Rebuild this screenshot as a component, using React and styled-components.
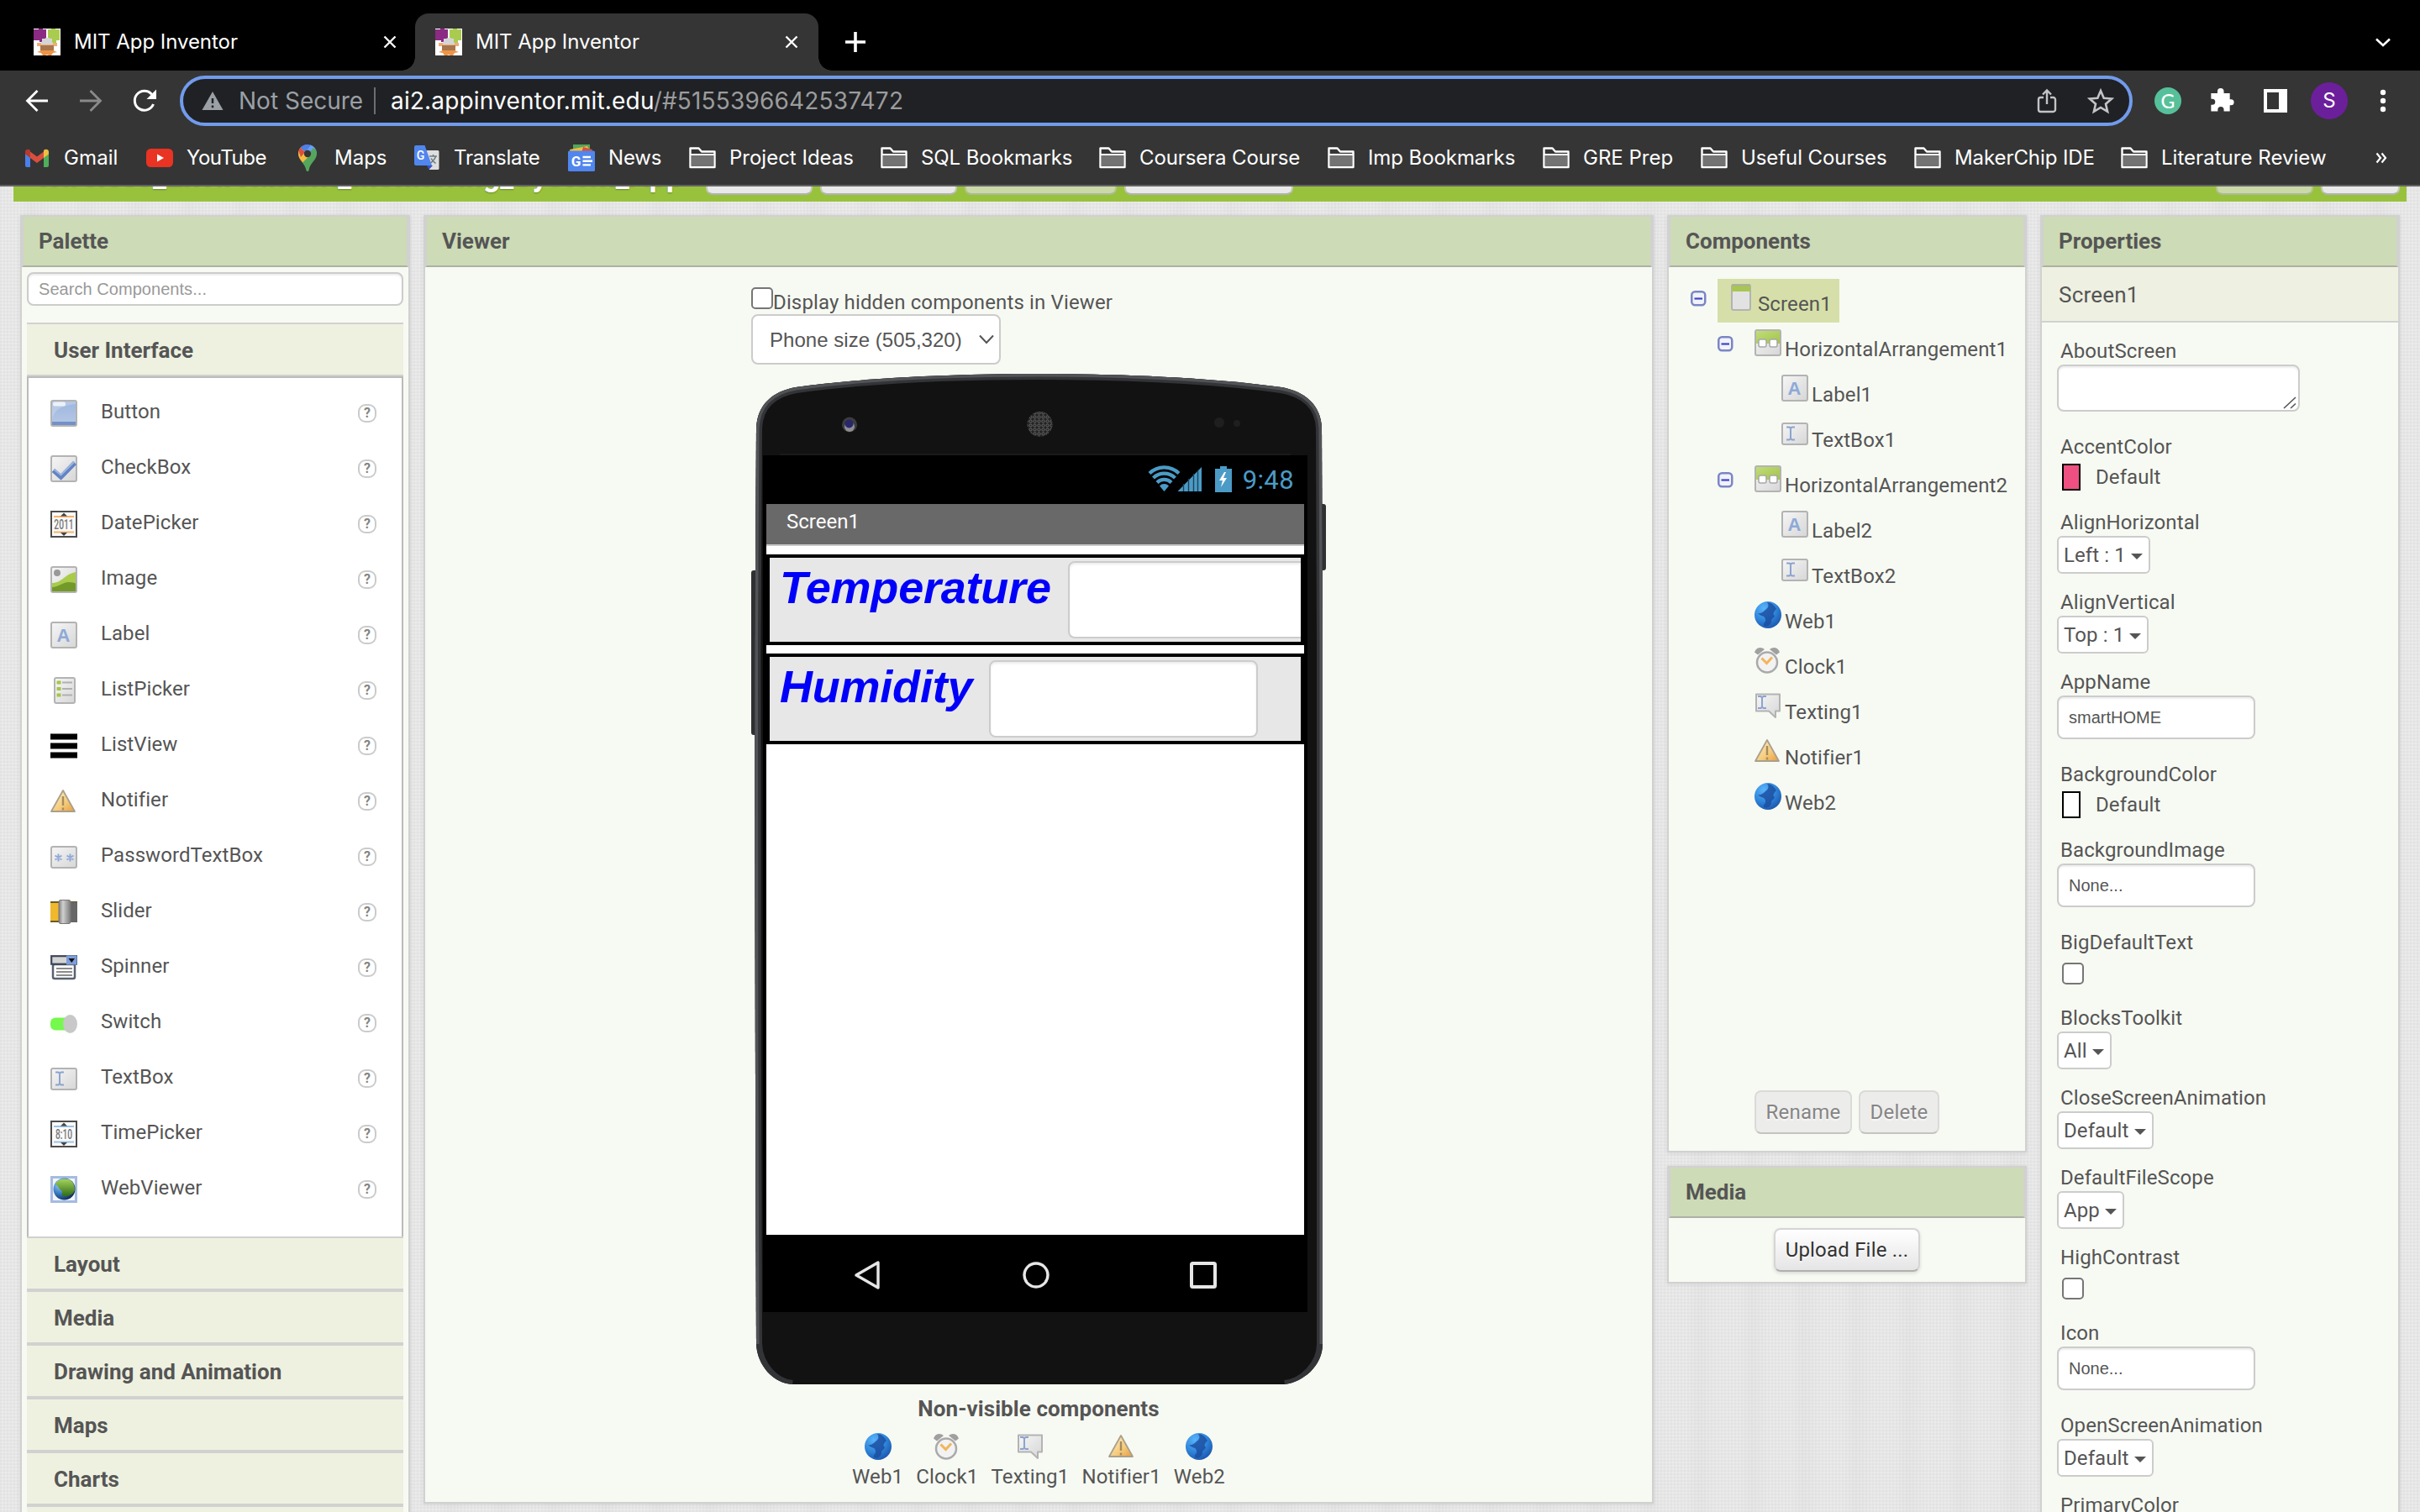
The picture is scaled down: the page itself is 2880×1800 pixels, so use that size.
import React from 'react';
import styled, { createGlobalStyle, css } from 'styled-components';

const sans = '"Liberation Sans", Arial, sans-serif';
const chromeFont = 'Inter, "Liberation Sans", sans-serif';
const pageFont = 'Roboto, "Liberation Sans", sans-serif';
const line = '#d1d1d1';
const ink = '#555';

const GlobalStyle = createGlobalStyle`
  * { box-sizing: border-box; }
  html, body { margin: 0; padding: 0; background: #e8e8e8; }
  body { overflow: hidden; font-family: ${pageFont}; }
  svg { display: block; flex: none; }
`;

/* ---------- browser chrome ---------- */

const Window = styled.div`
  width: 2880px;
  height: 1800px;
  overflow: hidden;
  display: flex;
  flex-direction: column;
`;

const TabStrip = styled.div`
  flex: none;
  height: 84px;
  padding-top: 16px;
  background: #000;
  display: flex;
  color: #fff;
`;

const Tab = styled.div`
  height: 68px;
  width: ${(p) => (p.$active ? 480 : 494)}px;
  padding: 0 ${(p) => (p.$active ? 24 : 22)}px 0 ${(p) => (p.$active ? 24 : 40)}px;
  display: flex;
  align-items: center;
  gap: 16px;
  font: 400 24px ${chromeFont};
  ${(p) =>
    p.$active &&
    css`
      position: relative;
      background: #353535;
      border-radius: 16px 16px 0 0;
      &::before,
      &::after {
        content: '';
        position: absolute;
        bottom: 0;
        width: 16px;
        height: 16px;
      }
      &::before {
        left: -16px;
        background: radial-gradient(circle at 0 0, transparent 15.5px, #353535 16px);
      }
      &::after {
        right: -16px;
        background: radial-gradient(circle at 100% 0, transparent 15.5px, #353535 16px);
      }
    `}
`;

const TabTitle = styled.span`
  flex: 1;
  white-space: nowrap;
  padding-bottom: 1px;
  letter-spacing: -0.04px;
`;

const NewTab = styled.div`
  display: flex;
  align-items: center;
  padding-left: 30px;
  flex: 1;
`;

const TabSearch = styled.div`
  display: flex;
  align-items: center;
  padding-right: 33px;
`;

const Toolbar = styled.div`
  flex: none;
  height: 72px;
  padding: 0 28px;
  background: #353535;
  display: flex;
  align-items: center;
`;

const NavButtons = styled.div`
  display: flex;
  gap: 32px;
  margin-right: 26px;
`;

const Omnibox = styled.div`
  flex: 1;
  height: 60px;
  border: 4px solid #719bec;
  border-radius: 30px;
  background: #202124;
  padding: 0 18px 0 22px;
  display: flex;
  align-items: center;
  font: 400 28px ${chromeFont};
  white-space: nowrap;
`;

const Security = styled.span`
  color: #9aa0a6;
  margin-left: 18px;
  width: 163px;
  height: 32px;
  line-height: 32px;
  border-right: 2px solid #6b6e72;
`;

const Url = styled.span`
  flex: 1;
  margin-left: 18px;
  color: #fff;
  letter-spacing: 0.17px;
`;

const UrlPath = styled.span`
  color: #9b9c9d;
`;

const OmniActions = styled.div`
  display: flex;
  gap: 32px;
`;

const Extensions = styled.div`
  display: flex;
  align-items: center;
  gap: 32px;
  margin: 0 26px;
`;

const Avatar = styled.div`
  width: 44px;
  height: 44px;
  border-radius: 50%;
  background: #6c1f9b;
  color: #fff;
  font: 400 24px/43px ${chromeFont};
  text-align: center;
  margin-right: 26px;
`;

const Grammarly = styled.div`
  width: 32px;
  height: 32px;
  border-radius: 50%;
  background: #56c09a;
  color: #fff;
  font: 500 23px/32px Lato, sans-serif;
  text-align: center;
`;

const BookmarkBar = styled.div`
  flex: none;
  height: 66px;
  padding-left: 28px;
  background: #353535;
  border-bottom: 2px solid #626264;
  display: flex;
  align-items: center;
`;

const BookmarkItem = styled.div`
  width: ${(p) => p.$width}px;
  display: flex;
  align-items: center;
  gap: 16px;
  color: #fff;
  font: 400 24px ${chromeFont};
  letter-spacing: ${(p) => p.$spacing || 0}px;
  white-space: nowrap;
`;

const BookmarkName = styled.span`
  padding-bottom: 2px;
`;

/* ---------- application page ---------- */

const Page = styled.div`
  flex: 1;
  min-height: 0;
  display: flex;
  flex-direction: column;
  background-color: #e9e9e9;
  background-image: repeating-linear-gradient(0deg, rgba(0, 0, 0, 0.018) 0 2px, transparent 2px 4px),
    repeating-linear-gradient(90deg, rgba(0, 0, 0, 0.018) 0 2px, transparent 2px 4px),
    repeating-linear-gradient(90deg, rgba(255, 255, 255, 0.1) 0 22px, rgba(0, 0, 0, 0.006) 38px, rgba(255, 255, 255, 0.1) 62px);
`;

const ProjectBar = styled.div`
  flex: none;
  height: 18px;
  margin: 0 16px;
  padding-right: 8px;
  background: #99c23c;
  overflow: hidden;
  display: flex;
  align-items: flex-start;
`;

const ProjectName = styled.div`
  width: 797px;
  height: 48px;
  margin: -31px 27px 0 0;
  text-align: right;
  color: #fff;
  font: 700 36px/36px ${pageFont};
  white-space: nowrap;
  text-shadow: 0 1px 2px rgba(0, 0, 0, 0.3);
`;

const BarButton = styled.div`
  width: ${(p) => p.$width}px;
  height: 10px;
  border: 2px solid ${(p) => (p.$disabled ? '#b5c58d' : '#c3c9b4')};
  border-top: 0;
  border-bottom-color: ${(p) => (p.$disabled ? '#adb99a' : '#b2b3b6')};
  border-radius: 0 0 8px 8px;
  background: ${(p) => (p.$disabled ? '#cbd8a8' : '#e9e9e9')};
  margin-right: 9px;
  &:last-child {
    margin-right: 0;
  }
`;

const BarSpacer = styled.div`
  flex: 1;
`;

const Workspace = styled.div`
  flex: 1;
  min-height: 0;
  display: grid;
  grid-template-columns: 464px 1464px 428px 428px;
  gap: 16px;
  padding: 16px 24px 0;
  align-items: start;
`;

const Column = styled.div`
  display: flex;
  flex-direction: column;
  gap: 16px;
`;

const Panel = styled.section`
  height: ${(p) => p.$height}px;
  border: 2px solid ${line};
  background: #f7faf3;
  display: flex;
  flex-direction: column;
  color: ${ink};
  box-shadow: 0 1px 5px rgba(0, 0, 0, 0.08);
`;

const PanelHeader = styled.h2`
  flex: none;
  margin: 0;
  height: 60px;
  padding: 0 18px;
  border: 2px solid ${line};
  border-top: 0;
  border-bottom-color: #aeb0a6;
  background: #cddbb6;
  font: 700 26px/58px ${pageFont};
  color: ${ink};
`;

/* palette */

const PaletteBody = styled.div`
  padding: 6px;
  display: flex;
  flex-direction: column;
`;

const SearchBox = styled.div`
  height: 40px;
  border: 2px solid #ccc;
  border-radius: 8px;
  background: #fff;
  box-shadow: inset 0 2px 2px rgba(0, 0, 0, 0.07);
  padding-left: 12px;
  color: #999;
  font: 400 20px/36px ${sans};
  letter-spacing: 0.05px;
  margin-bottom: 20px;
`;

const Category = styled.div`
  height: 64px;
  border: solid ${line};
  border-width: 2px 0;
  background: #eef1e0;
  padding-left: 32px;
  font: 700 26px/62px ${pageFont};
`;

const ComponentList = styled.div`
  height: 1024px;
  border: 2px solid #bbb;
  border-bottom: 0;
  background: #fff;
  padding: 9px 26px 0;
`;

const PaletteRow = styled.div`
  height: 66px;
  display: flex;
  align-items: center;
`;

const PaletteName = styled.span`
  flex: 1;
  margin-left: 28px;
  padding-bottom: 4px;
  font: 400 24px ${pageFont};
  letter-spacing: 0.07px;
`;

const Help = styled.span`
  width: 22px;
  height: 22px;
  margin: 0 4px 0 0;
  border: 2px solid #cbcbcb;
  border-radius: 9px;
  font: 700 16px/18px ${pageFont};
  text-align: center;
  color: #858585;
`;

/* viewer */

const ViewerBody = styled.div`
  padding: 22px 0 0 388px;
  display: flex;
  flex-direction: column;
  align-items: flex-start;
`;

const HiddenToggle = styled.label`
  height: 34px;
  display: flex;
  align-items: flex-start;
  font: 400 24px/34px ${pageFont};
  letter-spacing: 0.14px;
`;

const Checkbox = styled.span`
  width: 26px;
  height: 26px;
  border: 2px solid #767676;
  border-radius: 5px;
  background: #fff;
  margin-top: ${(p) => p.$top || 0}px;
  margin-left: ${(p) => p.$left || 0}px;
`;

const ToggleText = styled.span`
  padding-top: 3px;
`;

const SizeSelect = styled.div`
  width: 297px;
  height: 60px;
  border: 2px solid #ccc;
  border-radius: 8px;
  background: #fff;
  padding: 0 5px 0 20px;
  display: flex;
  align-items: center;
  justify-content: space-between;
  font: 400 24px ${sans};
  letter-spacing: 0.03px;
  margin-bottom: 10px;
`;

const SelectText = styled.span`
  padding-top: 1px;
`;

const Phone = styled.div`
  position: relative;
  width: 684px;
  height: 1204px;
  padding: 98px 22px 0 14px;
`;

const PhoneBody = styled.svg`
  position: absolute;
  left: 0;
  top: 0;
`;

const PhoneDisplay = styled.div`
  position: relative;
  height: 1020px;
  background: #000;
  padding: 0 4px;
  display: flex;
  flex-direction: column;
`;

const StatusBar = styled.div`
  height: 58px;
  display: flex;
  align-items: center;
  justify-content: flex-end;
  padding-right: 12px;
`;

const StatusTime = styled.span`
  margin-left: 13px;
  color: #4b9bc6;
  font: 400 31px ${pageFont};
  letter-spacing: 0.4px;
`;

const TitleBar = styled.div`
  height: 50px;
  border-bottom: 2px solid #c8c8c8;
  background: #696969;
  color: #fff;
  padding-left: 24px;
  font: 400 24px/43px ${pageFont};
`;

const AppScreen = styled.div`
  flex: 1;
  background: #fff;
  padding-top: 10px;
  display: flex;
  flex-direction: column;
  gap: 10px;
`;

const Arrangement = styled.div`
  height: 108px;
  border: 4px solid #000;
  background: #e7e7e7;
  padding: 4px 0 0 12px;
  display: flex;
  align-items: flex-start;
  overflow: hidden;
`;

const BigLabel = styled.span`
  flex: none;
  color: #0000fa;
  font: italic 700 54px/62px ${sans};
  letter-spacing: -0.22px;
  margin-right: 20px;
`;

const PhoneTextBox = styled.div`
  flex: none;
  width: 320px;
  height: 92px;
  border: 2px solid #ccc;
  border-radius: 8px;
  background: #fff;
  box-shadow: inset 0 2px 3px rgba(0, 0, 0, 0.08);
`;

const PhoneNav = styled.div`
  height: 92px;
  padding: 4px 102px 0 100px;
  display: flex;
  align-items: center;
  justify-content: space-between;
`;

const NonVisible = styled.div`
  width: 684px;
  display: flex;
  flex-direction: column;
  align-items: center;
`;

const NonVisibleTitle = styled.div`
  margin-top: 13px;
  height: 45px;
  font: 700 26px/32px ${pageFont};
  letter-spacing: 0.08px;
`;

const NonVisibleList = styled.div`
  display: flex;
  gap: 15px;
`;

const NonVisibleItem = styled.div`
  display: flex;
  flex-direction: column;
  align-items: center;
  gap: 4px;
  font: 400 24px/32px ${pageFont};
  letter-spacing: 0.15px;
`;

/* components tree */

const TreeList = styled.div`
  flex: 1;
  padding: 14px 0 0 26px;
  display: flex;
  flex-direction: column;
  gap: 2px;
`;

const TreeRow = styled.div`
  height: 52px;
  padding-left: ${(p) => p.$level * 32}px;
  display: flex;
  align-items: flex-start;
`;

const ToggleSlot = styled.span`
  width: 32px;
  padding-top: 14px;
`;

const TreeLabel = styled.div`
  height: 52px;
  padding: 6px 9px 0 12px;
  display: flex;
  align-items: flex-start;
  gap: 4px;
  font: 400 24px/30px ${pageFont};
  letter-spacing: 0.12px;
  background: ${(p) => (p.$selected ? '#d6dfa9' : 'transparent')};
`;

const TreeText = styled.span`
  padding-top: 9px;
`;

const ActionRow = styled.div`
  display: flex;
  justify-content: center;
  gap: 8px;
  padding-bottom: ${(p) => p.$bottom}px;
  padding-top: ${(p) => p.$top || 0}px;
`;

const Button = styled.div`
  height: 52px;
  width: ${(p) => p.$width}px;
  border: 2px solid ${(p) => (p.$disabled ? '#dadad8' : '#d5d5d5')};
  border-bottom-color: ${(p) => (p.$disabled ? '#c3c3c1' : '#b0b0b0')};
  border-radius: 8px;
  background: ${(p) => (p.$disabled ? '#ececea' : 'linear-gradient(#fff, #e5e5e5)')};
  box-shadow: ${(p) => (p.$disabled ? 'none' : '0 2px 4px rgba(0,0,0,0.12)')};
  color: ${(p) => (p.$disabled ? '#858585' : '#333')};
  text-align: center;
  text-shadow: 0 2px 2px rgba(255, 255, 255, 0.75);
  font: 400 24px/48px ${pageFont};
  letter-spacing: 0.2px;
`;

/* properties */

const Selected = styled.div`
  flex: none;
  height: 66px;
  border-bottom: 2px solid ${line};
  background: #eef0e1;
  padding-left: 20px;
  font: 400 26px/66px ${pageFont};
  letter-spacing: 0.2px;
`;

const PropertyList = styled.div`
  padding: 19px 0 0 18px;
`;

const Property = styled.div`
  height: ${(p) => p.$height}px;
  display: flex;
  flex-direction: column;
  align-items: flex-start;
`;

const PropertyName = styled.div`
  height: 31px;
  padding-left: 4px;
  font: 400 24px/30px ${pageFont};
  letter-spacing: 0.1px;
`;

const ColorChoice = styled.div`
  display: flex;
  align-items: center;
  gap: 18px;
  margin: 3px 0 0 6px;
  font: 400 24px/34px ${pageFont};
  letter-spacing: 0.1px;
`;

const Swatch = styled.span`
  width: 22px;
  height: 32px;
  border: 2px solid #000;
  background: ${(p) => p.$color};
`;

const DropDown = styled.div`
  height: 45px;
  border: 2px solid #ccc;
  border-radius: 6px;
  background: #fff;
  padding: 0 7px 0 6px;
  display: flex;
  align-items: center;
  gap: 6px;
  font: 400 24px/42px ${pageFont};
  letter-spacing: 0.1px;
`;

const Caret = styled.span`
  border: 7px solid transparent;
  border-top-color: ${ink};
  border-bottom: 0;
  margin-top: 3px;
`;

const TextInput = styled.div`
  width: 236px;
  height: 52px;
  border: 2px solid #ccc;
  border-radius: 8px;
  background: #fff;
  box-shadow: inset 0 2px 2px rgba(0, 0, 0, 0.07);
  padding-left: 12px;
  font: 400 20px/48px ${sans};
`;

const TextArea = styled.div`
  width: 289px;
  height: 56px;
  border: 2px solid #ccc;
  border-radius: 8px;
  background: #fff;
  box-shadow: inset 0 2px 2px rgba(0, 0, 0, 0.07);
  display: flex;
  align-items: flex-end;
  justify-content: flex-end;
  padding: 0 2px 1px 0;
`;

/* ---------- icons ---------- */

const Defs = () => (
  <svg width="0" height="0" aria-hidden="true">
    <defs>
      <linearGradient id="gBlue" x1="0" y1="0" x2="0" y2="1">
        <stop offset="0" stopColor="#9cb6de" />
        <stop offset="1" stopColor="#b7c8e6" />
      </linearGradient>
      <linearGradient id="gGray" x1="0" y1="0" x2="1" y2="1">
        <stop offset="0" stopColor="#f6f6f6" />
        <stop offset="1" stopColor="#d6d6d6" />
      </linearGradient>
      <linearGradient id="gLime" x1="0" y1="0" x2="1" y2="1">
        <stop offset="0" stopColor="#c0dd7a" />
        <stop offset="1" stopColor="#a3c447" />
      </linearGradient>
      <linearGradient id="gWarn" x1="0" y1="0" x2="1" y2="1">
        <stop offset="0" stopColor="#fff3cf" />
        <stop offset="0.6" stopColor="#f5cb7c" />
        <stop offset="1" stopColor="#e99a3c" />
      </linearGradient>
      <linearGradient id="gKnob" x1="0" y1="0" x2="1" y2="0">
        <stop offset="0" stopColor="#7e7e7e" />
        <stop offset="0.35" stopColor="#d0d0d0" />
        <stop offset="1" stopColor="#7a7a7a" />
      </linearGradient>
      <radialGradient id="gWorld" cx="0.35" cy="0.25" r="0.85">
        <stop offset="0" stopColor="#58b4fb" />
        <stop offset="0.55" stopColor="#2d83d8" />
        <stop offset="1" stopColor="#1a4fa6" />
      </radialGradient>
      <radialGradient id="gEarth" cx="0.3" cy="0.3" r="0.8">
        <stop offset="0" stopColor="#9cd3f8" />
        <stop offset="0.5" stopColor="#3b7cc4" />
        <stop offset="1" stopColor="#0c2452" />
      </radialGradient>
      <linearGradient id="gLand" x1="0" y1="0" x2="0" y2="1">
        <stop offset="0" stopColor="#a5d35c" />
        <stop offset="1" stopColor="#2f6b14" />
      </linearGradient>
    </defs>
  </svg>
);

const Icon = ({ size = 32, box = 32, children }) => (
  <svg width={size} height={size} viewBox={`0 0 ${box} ${box}`} fill="none">
    {children}
  </svg>
);

const Plate = ({ y = 1, h = 30, x = 1, w = 30, fill = 'url(#gGray)' }) => (
  <rect x={x} y={y} width={w} height={h} rx="2" fill={fill} stroke="#b3b3b3" strokeWidth="2" />
);

const IBeam = ({ x, y, h }) => (
  <path
    d={`M${x - 5} ${y}h3.5l1.5 1.5l1.5-1.5h3.5M${x} ${y + 1}v${h - 2}M${x - 5} ${y + h}h3.5l1.5-1.5l1.5 1.5h3.5`}
    stroke="#8ba4cf"
    strokeWidth="2"
  />
);

const Spinbox = ({ text, accent }) => (
  <>
    <rect x="1" y="1" width="30" height="30" fill="#fafafa" stroke="#4c4c4c" strokeWidth="2" />
    <path d="M4 7h24M4 25.5h24" stroke={accent} strokeWidth="2" />
    <path d="M12 6.500l4-4l4 4zM12 26l4 4l4-4z" fill="#444" />
    <text
      transform="translate(16 21.800) scale(.64 1)"
      textAnchor="middle"
      fontFamily="Roboto, sans-serif"
      fontWeight="500"
      fontSize="16"
      fill="#777"
    >
      {text}
    </text>
  </>
);

const glyphs = {
  button: (
    <>
      <Plate fill="url(#gBlue)" />
      <path d="M2 24C4 12 12 7 30 5V2H2z" fill="#fff" opacity=".22" />
      <rect x="3" y="2.5" width="15" height="5" rx="2" fill="#fff" opacity=".75" />
      <rect x="2" y="26" width="28" height="4" fill="#7391c8" />
    </>
  ),
  checkbox: (
    <>
      <Plate />
      <path d="M3.5 18l9 8L29 9" stroke="#6284c2" strokeWidth="5.5" />
      <path d="M4 16.5l8.500 7L28.500 7.500" stroke="#9db5df" strokeWidth="2" />
    </>
  ),
  date: <Spinbox text="2011" accent="#f6b26b" />,
  time: <Spinbox text="8:10" accent="#9cc3e6" />,
  image: (
    <>
      <Plate />
      <circle cx="8" cy="8" r="4" fill="#999" />
      <path d="M2 20C14 20 16 10 30 7V30H2z" fill="#a9cb4b" />
      <path d="M2 25C10 25 14 19 22 19c4 0 6 1 8 1.500V30H2z" fill="#74992b" />
    </>
  ),
  label: (
    <>
      <Plate />
      <text x="15.500" y="24" textAnchor="middle" fontFamily="Liberation Sans, Arial, sans-serif" fontWeight="700" fontSize="22" fill="#8ea9d8">
        A
      </text>
    </>
  ),
  listpicker: (
    <>
      <Plate x={5} w={24} />
      <path d="M14 6.500h12M14 14h12M14 21.500h12" stroke="#b0b0b0" strokeWidth="2" />
      <path d="M7.500 6.500h5M7.500 14h5M7.500 21.500h5" stroke="#a5c547" strokeWidth="4" />
    </>
  ),
  listview: <path d="M0 5h32M0 16h32M0 27h32" stroke="#000" strokeWidth="7" />,
  warning: (
    <>
      <path d="M15 3L29 28H1z" fill="url(#gWarn)" stroke="#a9a08c" strokeWidth="1.800" strokeLinejoin="round" />
      <path d="M15 10v11M15 23.500v3" stroke="#a58d5c" strokeWidth="2.400" />
    </>
  ),
  password: (
    <>
      <Plate y={4} h={25} />
      <path d="M9.500 12.500v9M5.500 14.500l8 5M13.500 14.500l-8 5M23.500 12.500v9M19.500 14.500l8 5M27.500 14.500l-8 5" stroke="#8fa9d8" strokeWidth="2" />
    </>
  ),
  slider: (
    <>
      <rect x="0" y="4" width="12" height="24" fill="#f0b82d" />
      <path d="M0 4h32M0 27h32" stroke="#6b5a2a" strokeWidth="2" />
      <rect x="22" y="4" width="10" height="24" fill="#666" />
      <rect x="10" y="1.500" width="14" height="28" rx="2" fill="url(#gKnob)" stroke="#777" />
    </>
  ),
  spinner: (
    <>
      <rect x="3" y="12" width="26" height="17" rx="2" fill="#fff" stroke="#5a6170" strokeWidth="2.500" />
      <path d="M7 17h19M7 21h19M7 25h19" stroke="#8c8c8c" strokeWidth="1.800" />
      <rect x="1.200" y="2.200" width="30" height="9.500" fill="#d4d4d4" stroke="#3d4659" strokeWidth="2.200" />
      <rect x="19" y="1.500" width="12.500" height="11" fill="#7f9ddb" />
      <path d="M21.500 5h7.500l-3.700 5z" fill="#111" />
    </>
  ),
  switch: (
    <>
      <rect x="0" y="9.500" width="26" height="15" rx="6" fill="#75f94c" />
      <ellipse cx="23.500" cy="17" rx="8.500" ry="11" fill="#c8c8c8" />
    </>
  ),
  textbox: (
    <>
      <Plate y={4} h={25} />
      <IBeam x={11} y={8.5} h={15} />
    </>
  ),
  webviewer: (
    <>
      <rect x="1.500" y="1.500" width="29" height="29" fill="#f2f5fa" stroke="#a5bbe0" strokeWidth="3" />
      <circle cx="16.500" cy="15.500" r="13" fill="url(#gEarth)" />
      <path d="M6 9C10 3 20 2 25 6c3 3 4 7 4 11c-2 4-5 6-9 7c-5 1-7-1-6-4c1-3-3-3-4-6c-1-2-3-3-4-5z" fill="url(#gLand)" />
    </>
  ),
  screen: (
    <>
      <Plate x={5} w={22} fill="#e2e2e2" />
      <rect x="5" y="2" width="22" height="7" fill="#a8c653" />
      <path d="M5 1.500h22" stroke="#aab092" strokeWidth="2" />
    </>
  ),
  arrangement: (
    <>
      <Plate />
      <path d="M2 2h28v15H2z" fill="url(#gLime)" />
      <rect x="5" y="12" width="9" height="9" rx="2" fill="#fff" stroke="#a8a8a8" strokeWidth="1.500" />
      <rect x="18" y="12" width="9" height="9" rx="2" fill="#fff" stroke="#a8a8a8" strokeWidth="1.500" />
    </>
  ),
  world: (
    <>
      <circle cx="16" cy="16" r="16" fill="url(#gWorld)" />
      <path d="M15 1c3 4 1 7-2 9c-3 3-6 5-9 4c3 4 8 2 9 7c1 4-3 4-2 8c4 2 8-1 9-5c-1-3 3-4 4-7c-3-2-1-5 2-8c-3-5-6-8-11-8z" fill="#1b4b9e" opacity=".8" />
    </>
  ),
  clock: (
    <>
      <path d="M0 6.500C2 .500 8-.500 12 3L4 9.500zM30 6.500C28 .500 22-.500 18 3L26 9.500z" fill="#a0a0a0" />
      <circle cx="15" cy="18.500" r="12" fill="#f2f2f2" stroke="#aaa" strokeWidth="2.500" />
      <path d="M8.500 13.500l6 6L21 12.500" stroke="#f3b55a" strokeWidth="3" />
    </>
  ),
  texting: (
    <>
      <path d="M2 2.500h28v20H25v7.500L17 22.500H2z" fill="url(#gGray)" stroke="#b3b3b3" strokeWidth="2" strokeLinejoin="round" />
      <IBeam x={9} y={5} h={14} />
    </>
  ),
};

const ComponentIcon = ({ name }) => <Icon>{glyphs[name]}</Icon>;

const Minus = () => (
  <Icon size={19} box={19}>
    <rect x="1.250" y="1.250" width="16" height="16" rx="4" fill="#f1f2fa" stroke="#7a86c4" strokeWidth="2.500" />
    <path d="M4.500 9.500h9.500" stroke="#3d43c6" strokeWidth="2.200" />
  </Icon>
);

const Favicon = () => (
  <Icon>
    <rect width="32" height="32" fill="#fff" />
    <path d="M0 1h6V0h5v1h4v13h-4v2H7v-2H0z" fill="#8b2b83" />
    <path d="M17 1h4V0h5v1h5v13h-4v3h-6l-4-4z" fill="#a9cc50" />
    <path d="M10 12h3l2-1h3l2 1h2v4l2 3H8l2-4z" fill="#d5d5d5" />
    <path d="M4 17h5v2h14v-2h5v4h-4v6H8v-6H4z" fill="#edae79" />
    <path d="M8 20h16v6H8z" fill="#a8764c" />
    <path d="M4 28l5-2h14l5 2-5 1-2 3h-3l-2-1-2 1h-3l-2-3z" fill="#ef9446" />
  </Icon>
);

const CloseX = () => (
  <Icon size={16} box={16}>
    <path d="M1.500 1.500l13 13M14.500 1.500l-13 13" stroke="#fff" strokeWidth="2.400" />
  </Icon>
);

const Folder = () => (
  <Icon>
    <path d="M1.500 4.500h10l3.500 4h15.500v18.500h-29z" fill="#353535" stroke="#fff" strokeWidth="2.400" strokeLinejoin="round" />
    <path d="M2.700 12h26.600v13.800H2.700z" fill="#737373" />
    <path d="M1.500 12h29" stroke="#fff" strokeWidth="2" />
  </Icon>
);

const brandIcons = {
  gmail: (
    <>
      <path d="M2 8v17a2 2 0 0 0 2 2h4V14z" fill="#4a80ed" />
      <path d="M30 8v17a2 2 0 0 1-2 2h-4V14z" fill="#4faf5b" />
      <path d="M8 8.500l8 6 8-6V16l-8 6-8-6z" fill="#d94f3d" />
      <path d="M2 9c0-3.500 3.500-4 5.500-2.500l.500.500v9l-6-4.500z" fill="#b63a30" />
      <path d="M30 9c0-3.500-3.500-4-5.500-2.500l-.5.500v9l6-4.500z" fill="#f1bd42" />
    </>
  ),
  youtube: (
    <>
      <rect y="5" width="32" height="22" rx="5.500" fill="#e93323" />
      <path d="M13 11.500v9l8-4.500z" fill="#fff" />
    </>
  ),
  maps: (
    <>
      <path d="M16 0C9.500 0 5 5 5 11c0 3 1.300 5.300 3 8l8-9z" fill="#d9503f" />
      <path d="M16 0c-3.500 0-6.500 1.500-8.500 4l5.500 5 6.500-8.500C18.500.200 17 0 16 0z" fill="#4a80ed" />
      <path d="M19.500.500C24 2 27 6 27 11h-7l-7-2z" fill="#6a9df3" />
      <path d="M27 11c0 8-8 10-9.500 20c-.5 1.500-2.500 1.500-3 0c-.8-4-2.500-6.500-5-10L23 4c2.500 2 4 4.500 4 7z" fill="#55a65c" />
      <path d="M5 11c0 4 2.500 7 5 10.500L19 13l-8-6-3.500-3C6 6 5 8.500 5 11z" fill="#f1bd42" />
      <path d="M5.500 8C6 6.500 6.500 5 7.500 4L13 9l-5 6z" fill="#d9503f" />
      <circle cx="16" cy="11" r="4.200" fill="#353535" />
    </>
  ),
  translate: (
    <>
      <path d="M12 7h17a1.500 1.500 0 0 1 1.500 1.500v20A1.500 1.500 0 0 1 29 30H19z" fill="#dedede" />
      <path d="M16 25h7l-4.500 5z" fill="#3550c4" />
      <path d="M3 1h10.500L22 25H3a2 2 0 0 1-2-2V3a2 2 0 0 1 2-2z" fill="#5086ee" />
      <text x="8.500" y="17.500" textAnchor="middle" fontFamily="Roboto, sans-serif" fontWeight="500" fontSize="14" fill="#fff">
        G
      </text>
      <path d="M19 14h9M23.500 12v2M26.500 14c-1 4-3.500 6-6 8M21 16.500c1 2 3 4.500 5.500 6" stroke="#6f7d85" strokeWidth="1.600" />
    </>
  ),
  news: (
    <>
      <path d="M6 0h20v9H6z" fill="#55a65c" />
      <path d="M2 6l21-4 3 6-23 2z" fill="#f1bd42" />
      <path d="M18 3l11 3-1 4H16z" fill="#d9503f" />
      <rect y="7.500" width="32" height="24.500" rx="1.500" fill="#5086ee" />
      <text x="9.500" y="25.500" textAnchor="middle" fontFamily="Roboto, sans-serif" fontWeight="700" fontSize="17" fill="#fff">
        G
      </text>
      <path d="M17.500 15h9.500M17.500 19.700h11.500M17.500 24.400h9.500" stroke="#fff" strokeWidth="2.400" />
    </>
  ),
};

/* ---------- data ---------- */

const bookmarks = [
  ['Gmail', 146, 'gmail', 0.1],
  ['YouTube', 176, 'youtube', -0.5],
  ['Maps', 142, 'maps', 0],
  ['Translate', 184, 'translate', -0.2],
  ['News', 144, 'news', -0.2],
  ['Project Ideas', 228],
  ['SQL Bookmarks', 260, null, -0.08],
  ['Coursera Course', 272, null, -0.12],
  ['Imp Bookmarks', 256, null, -0.08],
  ['GRE Prep', 188],
  ['Useful Courses', 254, null, -0.08],
  ['MakerChip IDE', 246, null, -0.08],
  ['Literature Review', 303, null, 0.03],
];

const palette = [
  ['Button', 'button'],
  ['CheckBox', 'checkbox'],
  ['DatePicker', 'date'],
  ['Image', 'image'],
  ['Label', 'label'],
  ['ListPicker', 'listpicker'],
  ['ListView', 'listview'],
  ['Notifier', 'warning'],
  ['PasswordTextBox', 'password'],
  ['Slider', 'slider'],
  ['Spinner', 'spinner'],
  ['Switch', 'switch'],
  ['TextBox', 'textbox'],
  ['TimePicker', 'time'],
  ['WebViewer', 'webviewer'],
];

const categories = ['Layout', 'Media', 'Drawing and Animation', 'Maps', 'Charts', ''];

const tree = [
  ['Screen1', 'screen', 0, true],
  ['HorizontalArrangement1', 'arrangement', 1, true],
  ['Label1', 'label', 2],
  ['TextBox1', 'textbox', 2],
  ['HorizontalArrangement2', 'arrangement', 1, true],
  ['Label2', 'label', 2],
  ['TextBox2', 'textbox', 2],
  ['Web1', 'world', 1],
  ['Clock1', 'clock', 1],
  ['Texting1', 'texting', 1],
  ['Notifier1', 'warning', 1],
  ['Web2', 'world', 1],
];

const properties = [
  ['AboutScreen', 114, 'area'],
  ['AccentColor', 90, 'color', '#ee5081'],
  ['AlignHorizontal', 95, 'select', 'Left : 1'],
  ['AlignVertical', 95, 'select', 'Top : 1'],
  ['AppName', 110, 'text', 'smartHOME'],
  ['BackgroundColor', 90, 'color', '#fff'],
  ['BackgroundImage', 110, 'text', 'None...'],
  ['BigDefaultText', 90, 'check'],
  ['BlocksToolkit', 95, 'select', 'All'],
  ['CloseScreenAnimation', 95, 'select', 'Default'],
  ['DefaultFileScope', 95, 'select', 'App'],
  ['HighContrast', 90, 'check'],
  ['Icon', 110, 'text', 'None...'],
  ['OpenScreenAnimation', 95, 'select', 'Default'],
  ['PrimaryColor', 95],
];

/* ---------- sections ---------- */

const PropertyEditor = ({ kind, value }) => {
  switch (kind) {
    case 'area':
      return (
        <TextArea>
          <Icon size={16} box={16}>
            <path d="M1 15L15 2M9 15l6-5.500" stroke="#555" strokeWidth="1.600" />
          </Icon>
        </TextArea>
      );
    case 'color':
      return (
        <ColorChoice>
          <Swatch $color={value} />
          Default
        </ColorChoice>
      );
    case 'select':
      return (
        <DropDown>
          {value}
          <Caret />
        </DropDown>
      );
    case 'text':
      return <TextInput>{value}</TextInput>;
    case 'check':
      return <Checkbox $top={8} $left={6} />;
    default:
      return null;
  }
};

const BrowserChrome = () => (
  <>
    <TabStrip>
      <Tab>
        <Favicon />
        <TabTitle>MIT App Inventor</TabTitle>
        <CloseX />
      </Tab>
      <Tab $active>
        <Favicon />
        <TabTitle>MIT App Inventor</TabTitle>
        <CloseX />
      </Tab>
      <NewTab>
        <Icon size={28} box={28}>
          <path d="M14 2v24M2 14h24" stroke="#fff" strokeWidth="3.600" />
        </Icon>
      </NewTab>
      <TabSearch>
        <Icon size={22} box={22}>
          <path d="M3 7.500l8 7.500 8-7.500" stroke="#fff" strokeWidth="2.600" />
        </Icon>
      </TabSearch>
    </TabStrip>
    <Toolbar>
      <NavButtons>
        <Icon>
          <path d="M29 16H5M16.500 4L4.500 16l12 12" stroke="#fff" strokeWidth="2.800" />
        </Icon>
        <Icon>
          <path d="M3 16h24M15.500 4l12 12-12 12" stroke="#8a8a8a" strokeWidth="2.800" />
        </Icon>
        <Icon>
          <path d="M26.500 20A11.500 11.500 0 1 1 24.500 8.200" stroke="#fff" strokeWidth="3" />
          <path d="M30 2.500V14H18.500z" fill="#fff" />
        </Icon>
      </NavButtons>
      <Omnibox>
        <Icon size={26} box={26}>
          <path d="M13 2L25.500 24H.500z" fill="#9aa0a6" />
          <path d="M13 10v6M13 18.500v2.800" stroke="#202124" strokeWidth="2.500" />
        </Icon>
        <Security>Not Secure</Security>
        <Url>
          ai2.appinventor.mit.edu<UrlPath>/#5155396642537472</UrlPath>
        </Url>
        <OmniActions>
          <Icon>
            <path d="M12 12H8.500A2.500 2.500 0 0 0 6 14.500v12A2.500 2.500 0 0 0 8.500 29h15a2.500 2.500 0 0 0 2.500-2.500v-12a2.500 2.500 0 0 0-2.500-2.500H20M16 20V4M11 8.500l5-5 5 5" stroke="#c3c4c5" strokeWidth="2.400" />
          </Icon>
          <Icon>
            <path d="M16 4l3.700 8.700 9.400.800-7.100 6.200 2.100 9.200L16 24l-8.100 4.900 2.100-9.200-7.100-6.200 9.400-.8z" stroke="#c3c4c5" strokeWidth="2.600" />
          </Icon>
        </OmniActions>
      </Omnibox>
      <Extensions>
        <Grammarly>G</Grammarly>
        <Icon>
          <path d="M3 8.500h8V6a4 4 0 0 1 8 0v2.500h7.500V16H28a3.700 3.700 0 0 1 0 7.400h-1.500V31H19v-2a3.800 3.800 0 0 0-7.600 0v2H3v-8h1.500a3.700 3.700 0 0 0 0-7.400H3z" transform="translate(.5 -1) scale(.95)" fill="#fff" />
        </Icon>
        <Icon>
          <path d="M2 2h28v28H2zM6 6v20h14V6z" fill="#fff" fillRule="evenodd" />
        </Icon>
      </Extensions>
      <Avatar>S</Avatar>
      <Icon>
        <circle cx="16" cy="6" r="3.200" fill="#fff" />
        <circle cx="16" cy="16" r="3.200" fill="#fff" />
        <circle cx="16" cy="26" r="3.200" fill="#fff" />
      </Icon>
    </Toolbar>
    <BookmarkBar>
      {bookmarks.map(([name, width, brand, spacing]) => (
        <BookmarkItem key={name} $width={width} $spacing={spacing}>
          {brand ? <Icon>{brandIcons[brand]}</Icon> : <Folder />}
          <BookmarkName>{name}</BookmarkName>
        </BookmarkItem>
      ))}
      <Icon size={14} box={14}>
        <path d="M1.500 1.500L6 7l-4.500 5.500M7.500 1.500L12 7l-4.500 5.500" stroke="#fff" strokeWidth="2.200" />
      </Icon>
    </BookmarkBar>
  </>
);

const PalettePanel = () => (
  <Panel $height={1700}>
    <PanelHeader>Palette</PanelHeader>
    <PaletteBody>
      <SearchBox>Search Components...</SearchBox>
      <Category>User Interface</Category>
      <ComponentList>
        {palette.map(([name, icon]) => (
          <PaletteRow key={name}>
            <ComponentIcon name={icon} />
            <PaletteName>{name}</PaletteName>
            <Help>?</Help>
          </PaletteRow>
        ))}
      </ComponentList>
      {categories.map((name) => (
        <Category key={name}>{name}</Category>
      ))}
    </PaletteBody>
  </Panel>
);

const edge =
  'M6 1156C5 900 4 500 4.500 320L6 66C7 38 25 22 53 17C140 5 250 1 342 1C434 1 545 5 631 17C659 22 678 38 679 66L680 320C680 500 680 900 680 1156';

const PhoneFrame = () => (
  <PhoneBody width="684" height="1204" viewBox="0 0 684 1204" fill="none">
    <defs>
      <clipPath id="bodyClip">
        <path d={`${edge}C680 1182 657 1201 635 1204H49C27 1203 7 1182 6 1156z`} />
      </clipPath>
      <pattern id="mesh" width="5" height="5" patternUnits="userSpaceOnUse">
        <circle cx="2.500" cy="2.500" r="1.600" stroke="#6a6a6a" strokeWidth="1" />
      </pattern>
    </defs>
    <path d="M0 238q0-3 3-3h5v196H3q-3 0-3-3z" fill="#2f3032" />
    <path d="M684 159q0-3-3-3h-5v79h5q3 0 3-3z" fill="#2f3032" />
    <g clipPath="url(#bodyClip)">
      <rect width="684" height="1204" fill="#121212" />
      <path d={`${edge}C680 1182 657 1204 635 1206M49 1206C27 1204 7 1182 6 1156`} stroke="#333437" strokeWidth="14" />
      <path d={edge} stroke="#525356" strokeWidth="7" />
    </g>
    <circle cx="117" cy="61.500" r="9" fill="#3d3d40" />
    <circle cx="117" cy="64" r="6" fill="#8e8e92" />
    <circle cx="116.500" cy="60.500" r="5" fill="#27276a" />
    <circle cx="343.500" cy="61" r="15" fill="#242424" />
    <circle cx="343.500" cy="61" r="15" fill="url(#mesh)" />
    <circle cx="557" cy="59" r="6" fill="#1f1f1f" />
    <circle cx="578" cy="60" r="4" fill="#1f1f1f" />
    <path d="M34 97h608" stroke="#222" strokeWidth="1" />
  </PhoneBody>
);

const StatusIcons = () => (
  <svg width="100" height="34" viewBox="0 0 100 34" fill="none">
    <path d="M19.500 31L14 24.500a7.500 7.500 0 0 1 11 0z" fill="#4b9bc6" />
    <path d="M11 20.500a12 12 0 0 1 17 0M6.500 15a18.500 18.500 0 0 1 26 0M2 9.500a25 25 0 0 1 35 0" stroke="#4b9bc6" strokeWidth="4.200" />
    <path d="M35.500 31L64 2v29z" fill="#4b9bc6" />
    <path d="M42.500 22v9M48.500 16v15M54.500 10v21M59.500 6v25" stroke="#1d4258" strokeWidth="1.400" />
    <path d="M80 4h6V1h8v3h6v28H80z" fill="#4b9bc6" />
    <path d="M91 8l-6 10h4l-2 8 7-11h-4l3-7z" fill="#fff" />
  </svg>
);

const ViewerPanel = () => (
  <Panel $height={1534}>
    <PanelHeader>Viewer</PanelHeader>
    <ViewerBody>
      <HiddenToggle>
        <Checkbox $top={2} />
        <ToggleText>Display hidden components in Viewer</ToggleText>
      </HiddenToggle>
      <SizeSelect>
        <SelectText>Phone size (505,320)</SelectText>
        <Icon size={20} box={20}>
          <path d="M2 5.500l8 8.500 8-8.500" stroke="#555" strokeWidth="2" />
        </Icon>
      </SizeSelect>
      <Phone>
        <PhoneFrame />
        <PhoneDisplay>
          <StatusBar>
            <StatusIcons />
            <StatusTime>9:48</StatusTime>
          </StatusBar>
          <TitleBar>Screen1</TitleBar>
          <AppScreen>
            <Arrangement>
              <BigLabel>Temperature</BigLabel>
              <PhoneTextBox />
            </Arrangement>
            <Arrangement>
              <BigLabel>Humidity</BigLabel>
              <PhoneTextBox />
            </Arrangement>
          </AppScreen>
          <PhoneNav>
            <Icon size={40} box={40}>
              <path d="M33 5v30L7 20z" stroke="#e6e6e6" strokeWidth="3.400" strokeLinejoin="round" />
            </Icon>
            <Icon size={36} box={36}>
              <circle cx="18" cy="18" r="14" stroke="#e6e6e6" strokeWidth="3.400" />
            </Icon>
            <Icon size={36} box={36}>
              <rect x="4" y="4" width="28" height="28" rx="1.500" stroke="#e6e6e6" strokeWidth="4" />
            </Icon>
          </PhoneNav>
        </PhoneDisplay>
      </Phone>
      <NonVisible>
        <NonVisibleTitle>Non-visible components</NonVisibleTitle>
        <NonVisibleList>
          {tree.slice(7).map(([name, icon]) => (
            <NonVisibleItem key={name}>
              <ComponentIcon name={icon} />
              {name}
            </NonVisibleItem>
          ))}
        </NonVisibleList>
      </NonVisible>
    </ViewerBody>
  </Panel>
);

const ComponentsColumn = () => (
  <Column>
    <Panel $height={1116}>
      <PanelHeader>Components</PanelHeader>
      <TreeList>
        {tree.map(([name, icon, level, open]) => (
          <TreeRow key={name} $level={level}>
            <ToggleSlot>{open && <Minus />}</ToggleSlot>
            <TreeLabel $selected={level === 0}>
              <ComponentIcon name={icon} />
              <TreeText>{name}</TreeText>
            </TreeLabel>
          </TreeRow>
        ))}
      </TreeList>
      <ActionRow $bottom={20}>
        <Button $disabled $width={116}>
          Rename
        </Button>
        <Button $disabled $width={96}>
          Delete
        </Button>
      </ActionRow>
    </Panel>
    <Panel $height={140}>
      <PanelHeader>Media</PanelHeader>
      <ActionRow $top={12} $bottom={12}>
        <Button $width={174}>Upload File ...</Button>
      </ActionRow>
    </Panel>
  </Column>
);

const PropertiesPanel = () => (
  <Panel $height={1700}>
    <PanelHeader>Properties</PanelHeader>
    <Selected>Screen1</Selected>
    <PropertyList>
      {properties.map(([name, height, kind, value]) => (
        <Property key={name} $height={height}>
          <PropertyName>{name}</PropertyName>
          <PropertyEditor kind={kind} value={value} />
        </Property>
      ))}
    </PropertyList>
  </Panel>
);

export default function App() {
  return (
    <Window>
      <GlobalStyle />
      <BrowserChrome />
      <Page>
        <ProjectBar>
          <ProjectName>Wireless_Environment_Monitoring_System_App</ProjectName>
          <BarButton $width={127} />
          <BarButton $width={163} />
          <BarButton $width={181} $disabled />
          <BarButton $width={201} />
          <BarSpacer />
          <BarButton $width={116} $disabled />
          <BarButton $width={94} />
        </ProjectBar>
        <Workspace>
          <PalettePanel />
          <ViewerPanel />
          <ComponentsColumn />
          <PropertiesPanel />
        </Workspace>
      </Page>
      <Defs />
    </Window>
  );
}
